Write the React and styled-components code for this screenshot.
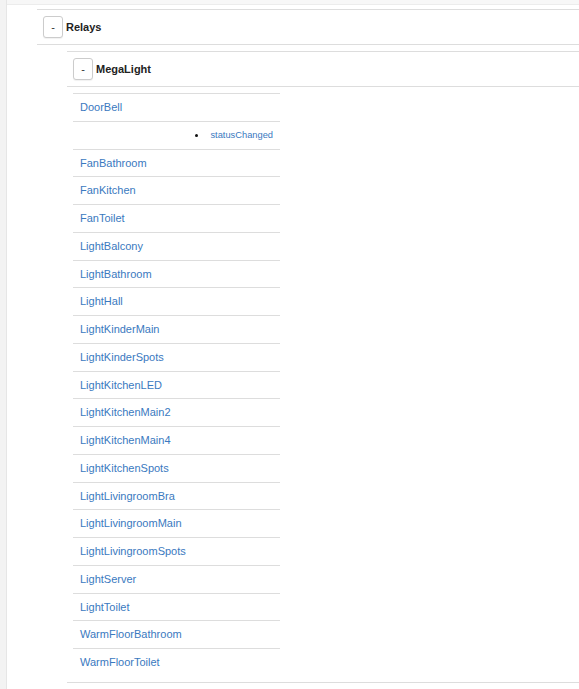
import React from 'react';
import styled, { createGlobalStyle } from 'styled-components';

const GlobalStyle = createGlobalStyle`
  html, body {
    margin: 0;
    padding: 0;
    background: #fff;
    font-family: "Liberation Sans", Arial, sans-serif;
    overflow: hidden;
  }
`;

const Page = styled.div`
  display: flex;
  min-height: 689px;
`;

const Sidebar = styled.div`
  width: 6px;
  flex-shrink: 0;
  background: #f3f3f3;
  border-right: 1px solid #e6e6e6;
`;

const Main = styled.div`
  flex: 1;
  min-width: 0;
`;

const TopBar = styled.div`
  height: 4px;
  background: #f7f7f7;
  border-bottom: 1px solid #ececec;
`;

const Content = styled.div`
  padding: 4px 0 0 30px;
`;

const Group = styled.div`
  border-top: 1px solid #dddddd;
  border-bottom: 1px solid #dddddd;
`;

const GroupHeader = styled.div`
  display: flex;
  align-items: center;
  padding: 6px 6px;
  gap: 3px;
`;

const Toggle = styled.button`
  width: 20px;
  height: 22px;
  padding: 0;
  border: 1px solid #cccccc;
  border-radius: 3px;
  background: #fff;
  box-shadow: 0 1px 1px rgba(0, 0, 0, 0.06);
  color: #333;
  font-family: "Liberation Sans", Arial, sans-serif;
  font-size: 11px;
  line-height: 20px;
`;

const Title = styled.span`
  font-size: 11px;
  font-weight: bold;
  color: #222;
`;

const Nested = styled.div`
  border-top: 1px solid #dddddd;
  margin: 6px 0 0 30px;
`;

const Children = styled.div`
  margin: 6px 0 6px 6px;
  width: 207px;
`;

const Item = styled.div`
  border-top: 1px solid #dddddd;
  padding: 5px 7px;
  line-height: 16.75px;
  font-size: 11px;
  text-align: ${p => (p.$right ? 'right' : 'left')};
`;

const Link = styled.a`
  color: #3a79c0;
  text-decoration: none;
`;

const Events = styled.ul`
  margin: 0;
  padding: 0;
  list-style: disc inside;
  color: #111;
  font-size: 9.3px;
`;

const Event = styled.li``;

const EventLink = styled(Link)`
  margin-left: 2px;
`;

const relays = [
  { name: 'DoorBell', events: ['statusChanged'] },
  { name: 'FanBathroom' },
  { name: 'FanKitchen' },
  { name: 'FanToilet' },
  { name: 'LightBalcony' },
  { name: 'LightBathroom' },
  { name: 'LightHall' },
  { name: 'LightKinderMain' },
  { name: 'LightKinderSpots' },
  { name: 'LightKitchenLED' },
  { name: 'LightKitchenMain2' },
  { name: 'LightKitchenMain4' },
  { name: 'LightKitchenSpots' },
  { name: 'LightLivingroomBra' },
  { name: 'LightLivingroomMain' },
  { name: 'LightLivingroomSpots' },
  { name: 'LightServer' },
  { name: 'LightToilet' },
  { name: 'WarmFloorBathroom' },
  { name: 'WarmFloorToilet' }
];

const App = () => (
  <>
    <GlobalStyle />
    <Page>
      <Sidebar />
      <Main>
        <TopBar />
        <Content>
          <Group>
            <GroupHeader>
              <Toggle>-</Toggle>
              <Title>Relays</Title>
            </GroupHeader>
          </Group>
          <Nested>
            <GroupHeader>
              <Toggle>-</Toggle>
              <Title>MegaLight</Title>
            </GroupHeader>
            <Group>
              <Children>
                {relays.map(r => (
                  <React.Fragment key={r.name}>
                    <Item>
                      <Link href="#">{r.name}</Link>
                    </Item>
                    {r.events && (
                      <Item $right>
                        <Events>
                          {r.events.map(e => (
                            <Event key={e}>
                              <EventLink href="#">{e}</EventLink>
                            </Event>
                          ))}
                        </Events>
                      </Item>
                    )}
                  </React.Fragment>
                ))}
              </Children>
            </Group>
          </Nested>
        </Content>
      </Main>
    </Page>
  </>
);

export default App;
